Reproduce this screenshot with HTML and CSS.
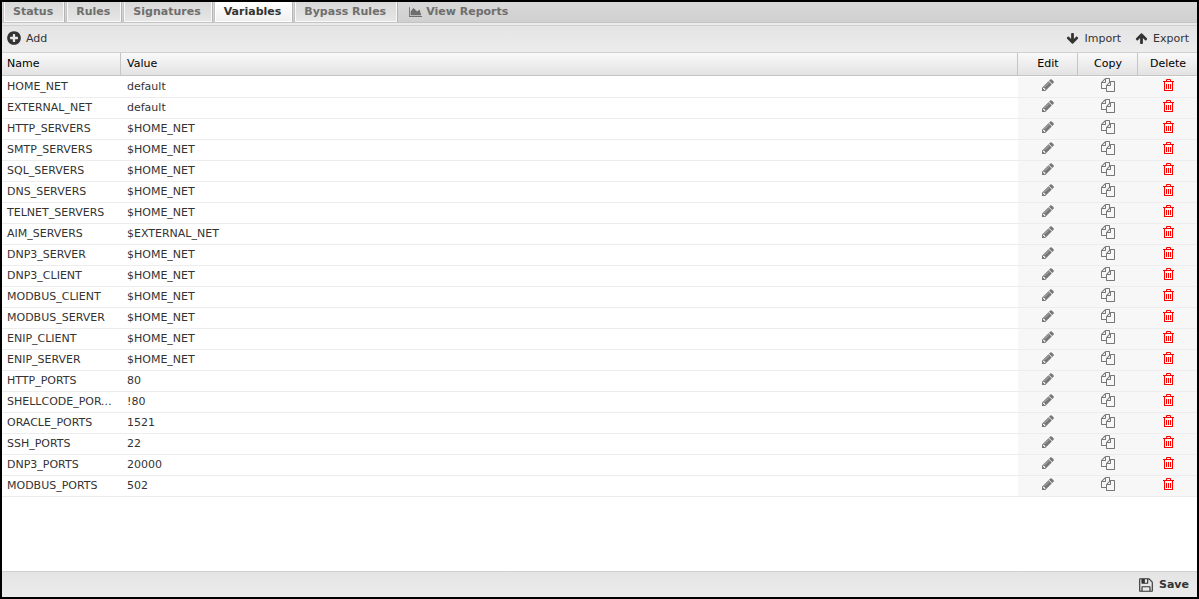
FILE: index.html
```html
<!DOCTYPE html>
<html lang="en">
<head>
<meta charset="utf-8">
<title>Variables</title>
<link rel="stylesheet" href="styles.css">
</head>
<body>
<svg class="sprite" aria-hidden="true">
  <symbol id="plus" viewBox="0 0 1792 1792"><path d="M1344 960v-128q0-26-19-45t-45-19h-256v-256q0-26-19-45t-45-19h-128q-26 0-45 19t-19 45v256h-256q-26 0-45 19t-19 45v128q0 26 19 45t45 19h256v256q0 26 19 45t45 19h128q26 0 45-19t19-45v-256h256q26 0 45-19t19-45zm320-64q0 209-103 385.5t-279.5 279.5-385.5 103-385.5-103-279.5-279.5-103-385.5 103-385.5 279.5-279.5 385.5-103 385.5 103 279.5 279.5 103 385.5z"/></symbol>
  <symbol id="pencil" viewBox="0 0 1792 1792"><path d="M491 1536l91-91-235-235-91 91v107h128v128h107zm523-928q0-22-22-22-10 0-17 7l-542 542q-7 7-7 17 0 22 22 22 10 0 17-7l542-542q7-7 7-17zm-54-192l416 416-832 832h-416v-416zm683 96q0 53-37 90l-166 166-416-416 166-165q36-38 90-38 53 0 91 38l235 234q37 39 37 91z"/></symbol>
  <symbol id="trash" viewBox="0 0 14 14"><path fill="none" stroke="currentColor" d="M2 3.5h11M5.5 3v-1.500h4v1.500M3.500 4v9M3 12.500h9M11.500 4v9M5.500 6v5M7.500 6v5M9.500 6v5"/></symbol>
  <symbol id="copy" viewBox="0 0 1792 1792"><path d="M1696 384q40 0 68 28t28 68v1216q0 40-28 68t-68 28h-960q-40 0-68-28t-28-68v-288h-544q-40 0-68-28t-28-68v-672q0-40 20-88t48-76l408-408q28-28 76-48t88-20h416q40 0 68 28t28 68v328q68-40 128-40h416zm-544 213l-299 299h299v-299zm-640-384l-299 299h299v-299zm196 647l316-316v-416h-384v416q0 40-28 68t-68 28h-416v640h512v-256q0-40 20-88t48-76zm956 804v-1152h-384v416q0 40-28 68t-68 28h-416v640h896z"/></symbol>
  <symbol id="floppy" viewBox="0 0 1792 1792"><path d="M512 1536h768v-384h-768v384zm896 0h128v-896q0-14-10-38.5t-20-34.5l-281-281q-10-10-34-20t-39-10v416q0 40-28 68t-68 28h-576q-40 0-68-28t-28-68v-416h-128v1280h128v-416q0-40 28-68t68-28h832q40 0 68 28t28 68v416zm-384-928v-320q0-13-9.5-22.5t-22.5-9.5h-192q-13 0-22.5 9.5t-9.5 22.5v320q0 13 9.5 22.5t22.5 9.5h192q13 0 22.5-9.5t9.5-22.5zm640 32v928q0 40-28 68t-68 28h-1344q-40 0-68-28t-28-68v-1344q0-40 28-68t68-28h928q40 0 88 20t76 48l280 280q28 28 48 76t20 88z"/></symbol>
  <symbol id="down" viewBox="0 0 1792 1792"><path d="M1675 832q0 53-37 90l-651 652q-39 37-91 37-53 0-90-37l-651-652q-38-36-38-90 0-53 38-91l74-75q39-37 91-37 53 0 90 37l294 294v-704q0-52 38-90t90-38h128q52 0 90 38t38 90v704l294-294q37-37 90-37 52 0 91 37l75 75q37 39 37 91z"/></symbol>
  <symbol id="up" viewBox="0 0 1792 1792"><path transform="rotate(180 896 896)" d="M1675 832q0 53-37 90l-651 652q-39 37-91 37-53 0-90-37l-651-652q-38-36-38-90 0-53 38-91l74-75q39-37 91-37 53 0 90 37l294 294v-704q0-52 38-90t90-38h128q52 0 90 38t38 90v704l294-294q37-37 90-37 52 0 91 37l75 75q37 39 37 91z"/></symbol>
  <symbol id="chart" viewBox="0 128 2048 1536"><path d="M2048 1536v128h-2048v-1536h128v1408h1920zm-384-1024l256 896h-1664v-576l448-576 576 576z"/></symbol>
</svg>
<main class="panel">
  <nav class="tabs">
    <button class="tab">Status</button>
    <button class="tab">Rules</button>
    <button class="tab">Signatures</button>
    <button class="tab active">Variables</button>
    <button class="tab">Bypass Rules</button>
    <button class="tab plain"><svg class="chart"><use href="#chart"/></svg>View Reports</button>
  </nav>
  <div class="toolbar">
    <button class="tool add"><svg class="large"><use href="#plus"/></svg>Add</button>
    <div class="transfer">
      <button class="tool"><svg class="small"><use href="#down"/></svg>Import</button>
      <button class="tool"><svg class="small"><use href="#up"/></svg>Export</button>
    </div>
  </div>
  <div class="content">
    <table class="grid">
      <colgroup><col class="name"><col><col class="action"><col class="action"><col class="last"></colgroup>
      <thead><tr><th>Name</th><th>Value</th><th class="center">Edit</th><th class="center">Copy</th><th class="center">Delete</th></tr></thead>
      <tbody id="rows"></tbody>
    </table>
  </div>
  <footer class="footer">
    <button class="tool save"><svg class="large"><use href="#floppy"/></svg>Save</button>
  </footer>
</main>
<script src="app.js"></script>
</body>
</html>
```
FILE: styles.css
```css
* { box-sizing: border-box; }
body {
  margin: 0;
  font: 11px/13px "DejaVu Sans", sans-serif;
  color: #333;
}
button {
  margin: 0;
  padding: 0;
  border: 0;
  background: none;
  font: inherit;
  color: inherit;
  white-space: nowrap;
}
svg { flex: none; fill: currentColor; }
.sprite { display: none; }
.panel {
  display: flex;
  flex-direction: column;
  min-height: 100vh;
  border: 2px solid #000;
  background: #fff;
}
.tabs {
  display: flex;
  gap: 3px;
  height: 24px;
  padding: 0 2px 3px;
  border-bottom: 1px solid #d0d0d0;
  background: linear-gradient(#d8d8d8, #d0d0d0 20px, #c4c4c4 20px, #c4c4c4 21px, #eaeaea 21px);
}
.tab {
  padding: 0 10px 0 8px;
  border: 1px solid #f8f8f8;
  border-top: 0;
  box-shadow: 1px 0 #b4b4b4, -1px 0 #c4c4c4;
  background: linear-gradient(#d8d8d8, #e6e6e6);
  font-weight: bold;
  color: #6e6e6e;
}
.tab.active {
  border-color: #fff;
  background: linear-gradient(#fff, #f0f0f0);
  color: #333;
}
.tab.plain {
  display: flex;
  align-items: center;
  gap: 4px;
  border-color: transparent;
  box-shadow: none;
  background: none;
}
.toolbar {
  display: flex;
  align-items: center;
  justify-content: space-between;
  height: 27px;
  padding: 0 8px 2px 4px;
  border-bottom: 1px solid #d0d0d0;
  background: linear-gradient(#e4e4e4, #ececec);
}
.tool { display: flex; align-items: center; gap: 5px; }
.tool.add { gap: 4px; }
.transfer { display: flex; gap: 14px; }
.large { width: 16px; height: 16px; }
.small { width: 13px; height: 13px; }
.chart { width: 13px; height: 10px; }
.icon { display: block; width: 14px; height: 14px; margin: 0 auto; }
.content { flex: 1; }
.grid {
  width: 100%;
  table-layout: fixed;
  border-collapse: separate;
  border-spacing: 0;
}
.name { width: 119px; }
.action { width: 60px; }
.last { width: 59px; }
.grid th {
  height: 23px;
  padding: 0 5px 2px 6px;
  border-right: 1px solid #c5c5c5;
  border-bottom: 1px solid #c5c5c5;
  background: linear-gradient(#f9f9f9, #e4e2e2);
  font-weight: normal;
  text-align: left;
  color: #000;
}
.grid th:first-child { padding-left: 5px; }
.grid th:last-child { border-right: 0; }
.grid th.center { text-align: center; }
.grid td {
  height: 21px;
  padding: 0 8px 2px 6px;
  border-bottom: 1px solid #ededed;
  overflow: hidden;
  text-overflow: ellipsis;
  white-space: nowrap;
}
.grid td:first-child { padding-left: 5px; }
.grid tbody tr:first-child td { height: 22px; border-top: 1px solid #fff; }
.grid td.cell { padding: 0 0 4px; background: #f7f7f7; color: #777; }
.cell button { display: block; margin: 0 auto; }
.grid td.remove { padding-left: 1px; color: #f00; }
.footer {
  display: flex;
  justify-content: flex-end;
  align-items: center;
  height: 26px;
  padding: 0 8px;
  border-top: 1px solid #d0d0d0;
  background: linear-gradient(#e4e4e4, #ececec);
}
.save { font-weight: bold; }
```
FILE: app.js
```js
const home = "$HOME_NET";
const variables = [
  ["HOME_NET", "default"], ["EXTERNAL_NET", "default"], ["HTTP_SERVERS", home],
  ["SMTP_SERVERS", home], ["SQL_SERVERS", home], ["DNS_SERVERS", home],
  ["TELNET_SERVERS", home], ["AIM_SERVERS", "$EXTERNAL_NET"], ["DNP3_SERVER", home],
  ["DNP3_CLIENT", home], ["MODBUS_CLIENT", home], ["MODBUS_SERVER", home],
  ["ENIP_CLIENT", home], ["ENIP_SERVER", home], ["HTTP_PORTS", "80"],
  ["SHELLCODE_PORTS", "!80"], ["ORACLE_PORTS", "1521"], ["SSH_PORTS", "22"],
  ["DNP3_PORTS", "20000"], ["MODBUS_PORTS", "502"]
];
const action = (icon, label, name, extra = "") =>
  `<td class="cell ${extra}"><button aria-label="${label} ${name}"><svg class="icon"><use href="#${icon}"/></svg></button></td>`;
document.getElementById("rows").innerHTML = variables.map(([name, value]) =>
  `<tr><td>${name}</td><td>${value}</td>${action("pencil", "Edit", name)}${action("copy", "Copy", name)}${action("trash", "Delete", name, "remove")}</tr>`
).join("");
```
